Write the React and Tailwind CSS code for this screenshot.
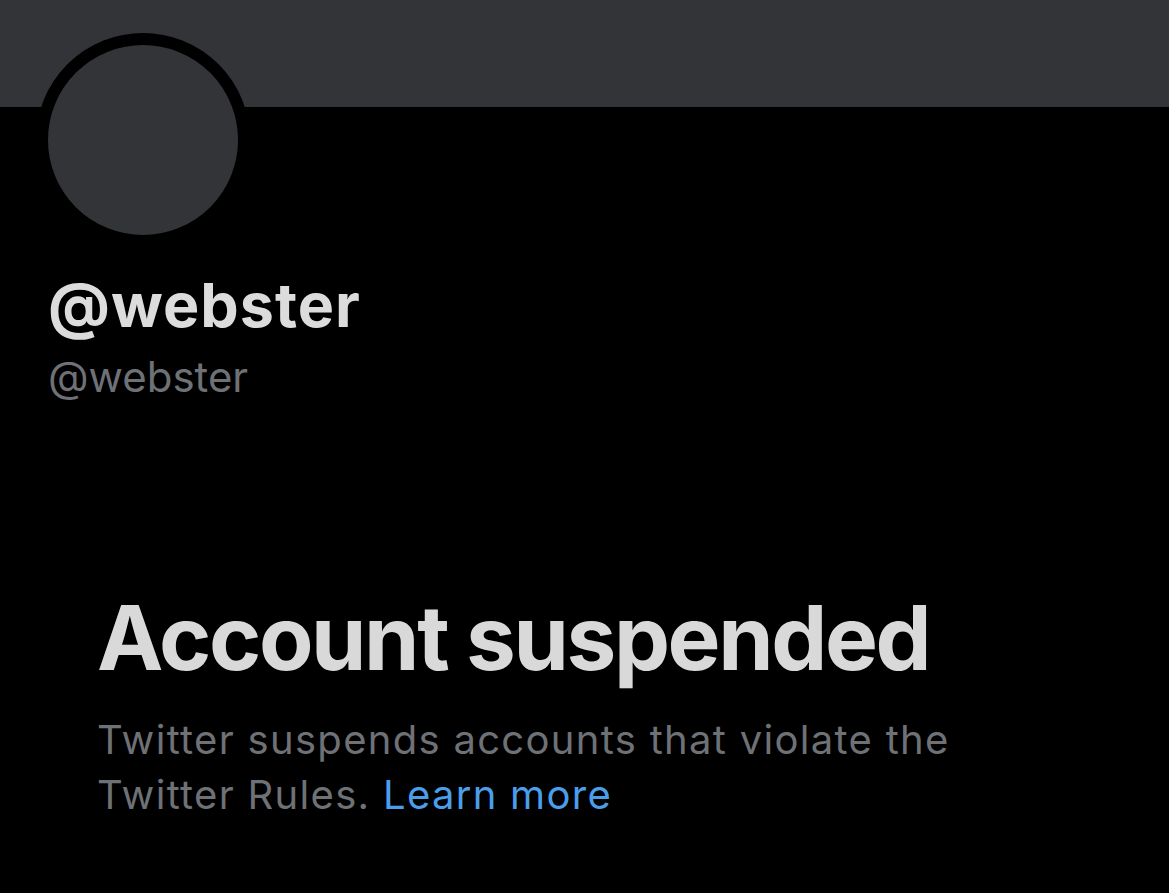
export default function App() {
  return (
    <div className="w-[1169px] h-[893px] bg-black overflow-hidden" style={{ fontFamily: 'Inter, "Liberation Sans", sans-serif' }}>
      <div className="h-[107px] bg-[#333438]" />
      <div className="ml-[36px] -mt-[74px] w-[214px] h-[214px] rounded-full border-[12px] border-black bg-[#333438]" />
      <div className="pl-[48px] pt-[23px]">
        <div className="text-[61px] leading-[70px] font-bold text-[#dcdcdc] tracking-[1px]">@webster</div>
        <div className="mt-[12px] text-[42px] leading-[50px] text-[#6e7176]">@webster</div>
      </div>
      <div className="pl-[97px] pt-[186px] pr-[150px]">
        <h1 className="text-[89px] leading-[100px] font-bold text-[#d9d9d9] tracking-[-2.4px]">Account suspended</h1>
        <p className="mt-[24px] w-[900px] text-[40px] leading-[55px] text-[#6e7176] tracking-[1.3px]">
          Twitter suspends accounts that violate the Twitter Rules. <span className="text-[#4a9eea]">Learn more</span>
        </p>
      </div>
    </div>
  );
}
